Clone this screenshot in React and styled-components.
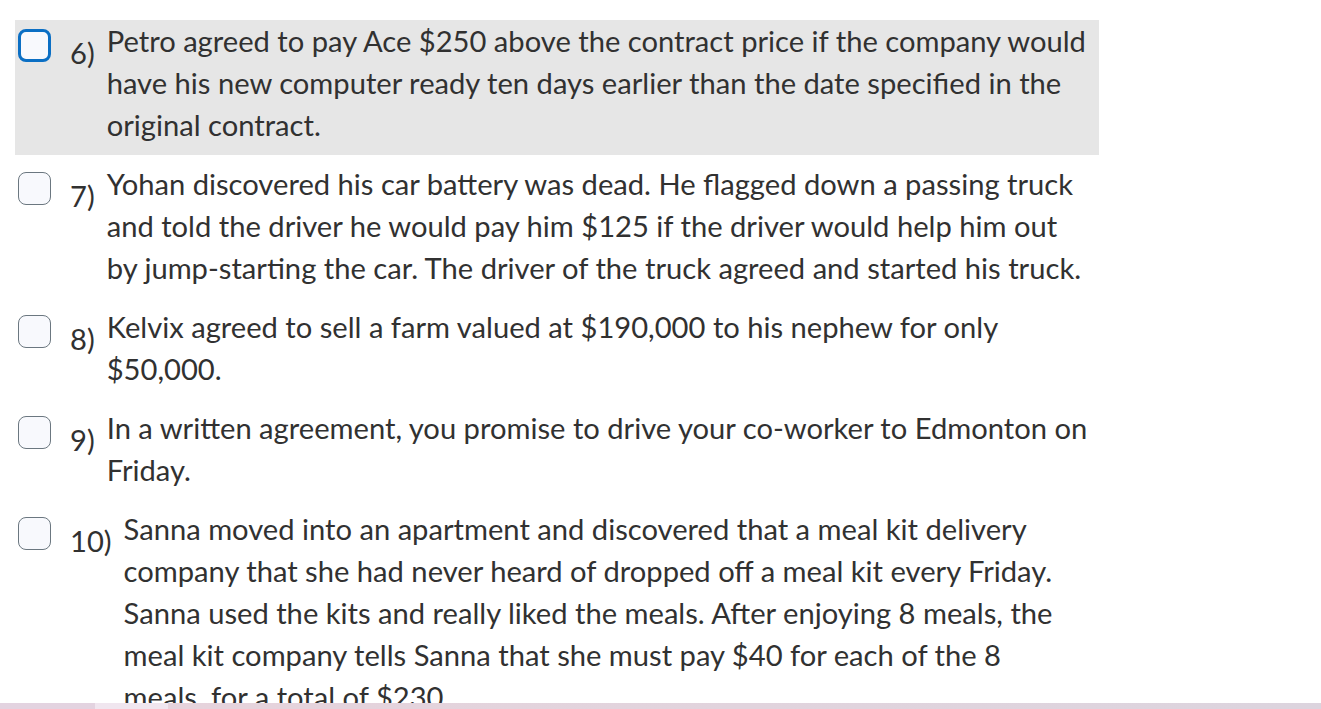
import styled, { createGlobalStyle } from "styled-components";

const GlobalStyle = createGlobalStyle`
  body {
    margin: 0;
    background: #ffffff;
    font-family: Lato, "Open Sans", sans-serif;
    color: #313131;
  }
`;

const List = styled.div`
  padding: 20px 0 0 15px;
  width: 1084px;
`;

const Option = styled.div`
  display: flex;
  align-items: flex-start;
  padding: 0 11px 9px 3px;
  margin-bottom: 8px;
  background: ${(p) => (p.$active ? "#e6e6e6" : "transparent")};
`;

const Box = styled.span`
  flex: none;
  box-sizing: border-box;
  width: 33px;
  height: 33px;
  margin-top: 9px;
  border-radius: 8px;
  background: #f8f9fd;
  border: ${(p) => (p.$active ? "3px solid #0b6fc4" : "1px solid #6b7780")};
`;

const Num = styled.span`
  flex: none;
  margin: 12px 12px 0 19px;
  font-size: 29.15px;
  line-height: 42px;
`;

const Text = styled.p`
  margin: 0;
  font-size: 29.15px;
  line-height: 42px;
`;

const Bar = styled.div`
  position: fixed;
  left: 0;
  right: 0;
  bottom: 0;
  height: 6px;
  background: linear-gradient(
    90deg,
    #e3d3e0 0,
    #e3d3e0 95px,
    #f0e6ef 95px,
    #f0e6ef 168px,
    #e6d3dc 168px,
    #dcd4de 100%
  );
`;

const items = [
  {
    n: "6)",
    text: "Petro agreed to pay Ace $250 above the contract price if the company would have his new computer ready ten days earlier than the date specified in the original contract.",
    active: true,
  },
  {
    n: "7)",
    text: "Yohan discovered his car battery was dead. He flagged down a passing truck and told the driver he would pay him $125 if the driver would help him out by jump-starting the car. The driver of the truck agreed and started his truck.",
  },
  {
    n: "8)",
    text: "Kelvix agreed to sell a farm valued at $190,000 to his nephew for only $50,000.",
  },
  {
    n: "9)",
    text: "In a written agreement, you promise to drive your co-worker to Edmonton on Friday.",
  },
  {
    n: "10)",
    text: "Sanna moved into an apartment and discovered that a meal kit delivery company that she had never heard of dropped off a meal kit every Friday. Sanna used the kits and really liked the meals. After enjoying 8 meals, the meal kit company tells Sanna that she must pay $40 for each of the 8 meals, for a total of $230.",
  },
];

export default function App() {
  return (
    <>
      <GlobalStyle />
      <List>
        {items.map((it) => (
          <Option key={it.n} $active={it.active}>
            <Box $active={it.active} />
            <Num>{it.n}</Num>
            <Text>{it.text}</Text>
          </Option>
        ))}
      </List>
      <Bar />
    </>
  );
}
